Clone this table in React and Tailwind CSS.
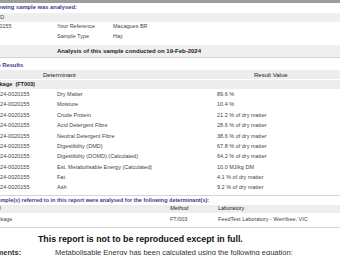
const results = [
  ['Dry Matter', '89.6 %'],
  ['Moisture', '10.4 %'],
  ['Crude Protein', '21.2 % of dry matter'],
  ['Acid Detergent Fibre', '28.6 % of dry matter'],
  ['Neutral Detergent Fibre', '38.6 % of dry matter'],
  ['Digestibility (DMD)', '67.8 % of dry matter'],
  ['Digestibility (DOMD) (Calculated)', '64.2 % of dry matter'],
  ['Est. Metabolisable Energy (Calculated)', '10.0 MJ/kg DM'],
  ['Fat', '4.1 % of dry matter'],
  ['Ash', '9.2 % of dry matter'],
]

export default function App() {
  return (
    <div className="h-[255px] w-[340px] overflow-hidden bg-white font-['Liberation_Sans',Arial,sans-serif] text-[5.5px] leading-none text-[#444]">
      <div className="h-[3px] bg-[#9d9d9d]" />

      {/* sample details */}
      <div className="flex h-[10px] items-center whitespace-nowrap text-[5.8px] font-bold text-[#3b3b8f]">
        <span className="-ml-[23px]">The following sample was analysed:</span>
      </div>
      <div className="flex h-[9px] items-center whitespace-nowrap bg-[#efefef]">
        <span className="-ml-[12px]">Lab ID</span>
      </div>
      <div className="flex h-[10px] items-center whitespace-nowrap">
        <span className="w-[57px] shrink-0 overflow-hidden">
          <span className="-ml-[24px] block">2024-0020155</span>
        </span>
        <span className="w-[56px] shrink-0">Your Reference</span>
        <span>Macagues BR</span>
      </div>
      <div className="flex h-[10px] items-center whitespace-nowrap">
        <span className="w-[57px] shrink-0" />
        <span className="w-[56px] shrink-0">Sample Type</span>
        <span>Hay</span>
      </div>
      <div className="mt-[3px] flex h-[13px] items-center whitespace-nowrap border-b border-[#d4d4d4] bg-[#efefef] pl-[57px] text-[6px] font-bold text-[#222]">
        Analysis of this sample conducted on 19-Feb-2024
      </div>

      {/* results */}
      <div className="mt-[3px] flex h-[9px] items-center whitespace-nowrap text-[5.8px] font-bold text-[#3b3b8f]">
        <span className="-ml-[20px]">Sample Results</span>
      </div>
      <div className="flex h-[9px] items-center whitespace-nowrap bg-[#ededed] text-[6px] text-[#222]">
        <span className="w-[254px] shrink-0 pl-[43px]">Determinant</span>
        <span>Result Value</span>
      </div>
      <div className="mt-px flex h-[9px] items-center whitespace-nowrap bg-[#ededed] font-bold text-[#222]">
        <span className="-ml-[10px]">Package&nbsp;&nbsp;(FT003)</span>
      </div>
      <div className="pt-[0.5px]">
        {results.map(([name, value]) => (
          <div key={name} className="flex h-[10.4px] items-center whitespace-nowrap">
            <span className="w-[57px] shrink-0 overflow-hidden">
              <span className="-ml-[6px] block">2024-0020155</span>
            </span>
            <span className="w-[160px] shrink-0">{name}</span>
            <span>{value}</span>
          </div>
        ))}
      </div>
      <div className="h-[2.5px] border-b border-[#d4d4d4]" />

      {/* test methods */}
      <div className="flex h-[9px] items-center whitespace-nowrap text-[5.5px] font-bold text-[#3b3b8f]">
        <span className="-ml-[17px]">The sample(s) referred to in this report were analysed for the following determinant(s):</span>
      </div>
      <div className="flex h-[8px] items-center whitespace-nowrap bg-[#ededed] text-[#222]">
        <span className="w-[170px] shrink-0 overflow-hidden">
          <span className="-ml-[25px] block">Test Panel</span>
        </span>
        <span className="w-[48px] shrink-0 italic">Method</span>
        <span>Laboratory</span>
      </div>
      <div className="flex h-[15px] items-center whitespace-nowrap border-b border-[#d4d4d4]">
        <span className="w-[170px] shrink-0 overflow-hidden">
          <span className="-ml-[9px] block">Package</span>
        </span>
        <span className="w-[48px] shrink-0">FT/003</span>
        <span>FeedTest Laboratory - Werribee, VIC</span>
      </div>

      <div className="mt-px flex h-[20px] items-center whitespace-nowrap pl-[38px] text-[8.8px] font-bold text-[#111]">
        This report is not to be reproduced except in full.
      </div>
      <div className="flex h-[8px] items-center whitespace-nowrap text-[7.5px] text-[#333]">
        <span className="w-[55px] shrink-0 overflow-hidden">
          <span className="-ml-[20px] block font-bold">Comments:</span>
        </span>
        <span>Metabolisable Energy has been calculated using the following equation:</span>
      </div>
    </div>
  )
}
